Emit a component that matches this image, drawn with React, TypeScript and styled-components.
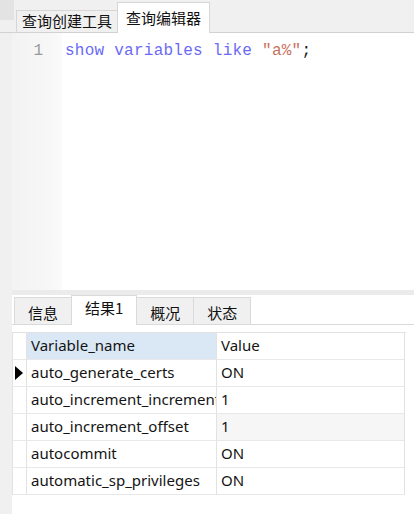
import React from "react";
import styled, { createGlobalStyle } from "styled-components";

const Global = createGlobalStyle`
  html, body { margin: 0; padding: 0; background: #f0f0f0; }
  #root { width: 414px; height: 514px; }
`;

const Page = styled.div`
  width: 414px;
  height: 514px;
  display: flex;
  flex-direction: column;
  background: #f0f0f0;
  overflow: hidden;
`;

const TopBar = styled.div`
  height: 33px;
  box-sizing: border-box;
  display: flex;
  align-items: flex-end;
  border-bottom: 1px solid #d2d2d2;
  background: #f0f0f0;
`;

const Corner = styled.div`
  align-self: flex-start;
  width: 14px;
  height: 20px;
  margin-right: 2px;
  background: #e3e3e3;
`;

const TopTab = styled.div<{ $active?: boolean }>`
  box-sizing: border-box;
  height: ${(p) => (p.$active ? 31 : 22)}px;
  margin-bottom: ${(p) => (p.$active ? -1 : 0)}px;
  padding: ${(p) => (p.$active ? "6px 8px 0 8px" : "1px 5px 0 5px")};
  border: 1px solid #d6d6d6;
  border-bottom: none;
  margin-left: ${(p) => (p.$active ? -1 : 0)}px;
  background: ${(p) => (p.$active ? "#ffffff" : "#f0f0f0")};
  font-family: "Noto Sans CJK SC", "Noto Sans", sans-serif;
  font-size: 15px;
  line-height: 18px;
  color: #111;
  white-space: nowrap;
`;

const Workspace = styled.div`
  flex: 1;
  display: flex;
  min-height: 0;
`;

const Strip = styled.div`
  width: 12px;
  flex-shrink: 0;
  background: #f0f0f0;
`;

const Main = styled.div`
  flex: 1;
  display: flex;
  flex-direction: column;
  min-width: 0;
`;

const Editor = styled.div`
  height: 257px;
  display: flex;
  background: #ffffff;
`;

const Gutter = styled.div`
  width: 50px;
  flex-shrink: 0;
  box-sizing: border-box;
  padding: 8px 19px 0 0;
  text-align: right;
  background: linear-gradient(to right, #f3f3f3, #f7f7f7 75%, #fbfbfb);
  font-family: "Liberation Mono", monospace;
  font-size: 16px;
  line-height: 20px;
  color: #9a9a9a;
`;

const Code = styled.div`
  flex: 1;
  padding: 8px 0 0 3px;
  font-family: "Liberation Mono", monospace;
  font-size: 16px;
  letter-spacing: 0.25px;
  line-height: 20px;
  color: #1a1a1a;
  white-space: pre;
`;

const Kw = styled.span`
  color: #6a6af5;
`;

const Str = styled.span`
  color: #c8705c;
`;

const Splitter = styled.div`
  height: 5px;
  background: #ebebeb;
`;

const ResultBar = styled.div`
  height: 30px;
  box-sizing: border-box;
  display: flex;
  align-items: flex-end;
  padding-left: 2px;
  background: #ffffff;
  border-bottom: 1px solid #dadada;
`;

const ResultTab = styled.div<{ $active?: boolean }>`
  box-sizing: border-box;
  height: ${(p) => (p.$active ? 30 : 27)}px;
  margin-bottom: ${(p) => (p.$active ? -1 : 0)}px;
  margin-left: -1px;
  padding: ${(p) => (p.$active ? "3px 13px 0" : "6px 13px 0")};
  border: 1px solid #dadada;
  border-bottom: none;
  background: ${(p) => (p.$active ? "#ffffff" : "#f0f0f0")};
  font-family: "Noto Sans CJK SC", "Noto Sans", sans-serif;
  font-size: 15px;
  line-height: 18px;
  color: #111;
  white-space: nowrap;
  &:first-child { margin-left: 0; }
`;

const GridArea = styled.div`
  flex: 1;
  background: #ffffff;
  padding-top: 7px;
`;

const Table = styled.div`
  display: grid;
  grid-template-columns: 14px 190px 188px;
  width: 393px;
  border-top: 1px solid #e2e2e2;
  border-left: 1px solid #e2e2e2;
`;

const Cell = styled.div<{ $head?: boolean; $shade?: boolean }>`
  box-sizing: border-box;
  height: 27px;
  border-right: 1px solid #e2e2e2;
  border-bottom: 1px solid #e8e8e8;
  padding-left: 4px;
  font-family: "Noto Sans", "Open Sans", sans-serif;
  font-size: 15px;
  line-height: 25px;
  color: #141414;
  white-space: nowrap;
  overflow: hidden;
  background: ${(p) => (p.$head ? "#dae8f6" : p.$shade ? "#f6f6f6" : "#ffffff")};
`;

const Indicator = styled.div`
  box-sizing: border-box;
  height: 27px;
  border-right: 1px solid #e2e2e2;
  border-bottom: 1px solid #e8e8e8;
  display: flex;
  align-items: center;
  padding-left: 2px;
  background: #ffffff;
`;

const rows = [
  ["auto_generate_certs", "ON"],
  ["auto_increment_increment", "1"],
  ["auto_increment_offset", "1"],
  ["autocommit", "ON"],
  ["automatic_sp_privileges", "ON"],
];

export default function App() {
  return (
    <Page>
      <Global />
      <TopBar>
        <Corner />
        <TopTab>查询创建工具</TopTab>
        <TopTab $active>查询编辑器</TopTab>
      </TopBar>
      <Workspace>
        <Strip />
        <Main>
          <Editor>
            <Gutter>1</Gutter>
            <Code>
              <Kw>show variables like</Kw> <Str>"a%"</Str>;
            </Code>
          </Editor>
          <Splitter />
          <ResultBar>
            <ResultTab>信息</ResultTab>
            <ResultTab $active>结果1</ResultTab>
            <ResultTab>概况</ResultTab>
            <ResultTab>状态</ResultTab>
          </ResultBar>
          <GridArea>
            <Table>
              <Indicator />
              <Cell $head>Variable_name</Cell>
              <Cell>Value</Cell>
              {rows.map(([name, value], i) => (
                <React.Fragment key={name}>
                  <Indicator>
                    {i === 0 && (
                      <svg width="8" height="14" viewBox="0 0 8 14">
                        <path d="M0 0 L8 7 L0 14 Z" fill="#000" />
                      </svg>
                    )}
                  </Indicator>
                  <Cell>{name}</Cell>
                  <Cell $shade={i === 2}>{value}</Cell>
                </React.Fragment>
              ))}
            </Table>
          </GridArea>
        </Main>
      </Workspace>
    </Page>
  );
}
